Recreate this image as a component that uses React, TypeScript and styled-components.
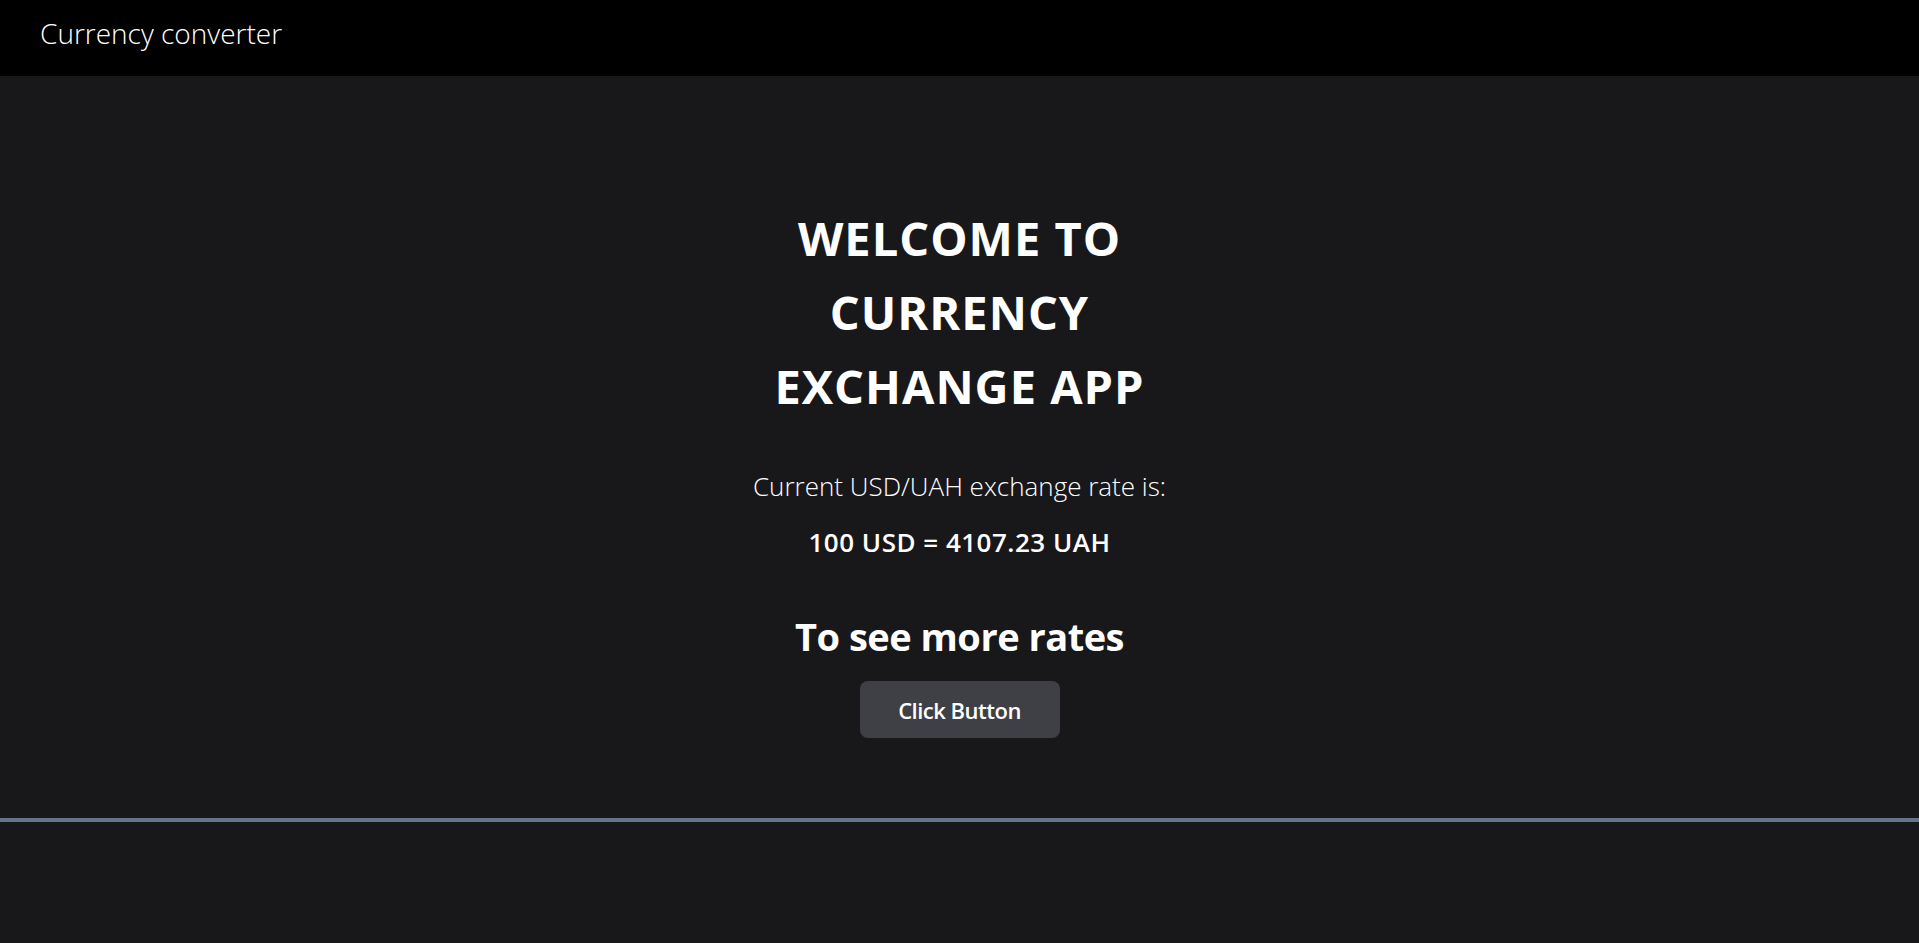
import React from "react";
import styled, { createGlobalStyle } from "styled-components";

const Global = createGlobalStyle`
  html, body { margin: 0; padding: 0; background: #18181b; }
  body { font-family: "Open Sans", "Noto Sans", sans-serif; color: #ffffff; }
  * { box-sizing: border-box; }
`;

const Header = styled.header`
  height: 76px;
  background: #000000;
  display: flex;
  align-items: center;
  padding: 0 0 10px 40px;
`;

const Brand = styled.div`
  font-size: 28px;
  font-weight: 300;
  color: #ffffff;
  letter-spacing: 0;
`;

const Main = styled.main`
  height: 742px;
  display: flex;
  flex-direction: column;
  align-items: center;
  padding-top: 125px;
  text-align: center;
`;

const Title = styled.h1`
  margin: 0;
  max-width: 440px;
  font-size: 47px;
  line-height: 74px;
  font-weight: 700;
  letter-spacing: 1px;
`;

const Lead = styled.p`
  margin: 45px 0 0;
  font-size: 26px;
  font-weight: 300;
  line-height: 36px;
  letter-spacing: 0;
`;

const Rate = styled.p`
  margin: 20px 0 0;
  font-size: 26px;
  font-weight: 600;
  line-height: 36px;
  letter-spacing: 0.5px;
`;

const Subtitle = styled.h2`
  margin: 51px 0 0;
  font-size: 38px;
  font-weight: 700;
  line-height: 50px;
  letter-spacing: -0.5px;
`;

const Button = styled.button`
  margin-top: 20px;
  width: 200px;
  height: 57px;
  border: none;
  border-radius: 8px;
  background: #3f3f46;
  color: #ffffff;
  font-family: inherit;
  font-size: 22px;
  font-weight: 600;
  letter-spacing: -0.5px;
  cursor: pointer;
`;

const Footer = styled.footer`
  border-top: 4px solid #64748b;
  height: 125px;
`;

export default function App() {
  return (
    <>
      <Global />
      <Header>
        <Brand>Currency converter</Brand>
      </Header>
      <Main>
        <Title>WELCOME TO CURRENCY EXCHANGE APP</Title>
        <Lead>Current USD/UAH exchange rate is:</Lead>
        <Rate>100 USD = 4107.23 UAH</Rate>
        <Subtitle>To see more rates</Subtitle>
        <Button>Click Button</Button>
      </Main>
      <Footer />
    </>
  );
}
